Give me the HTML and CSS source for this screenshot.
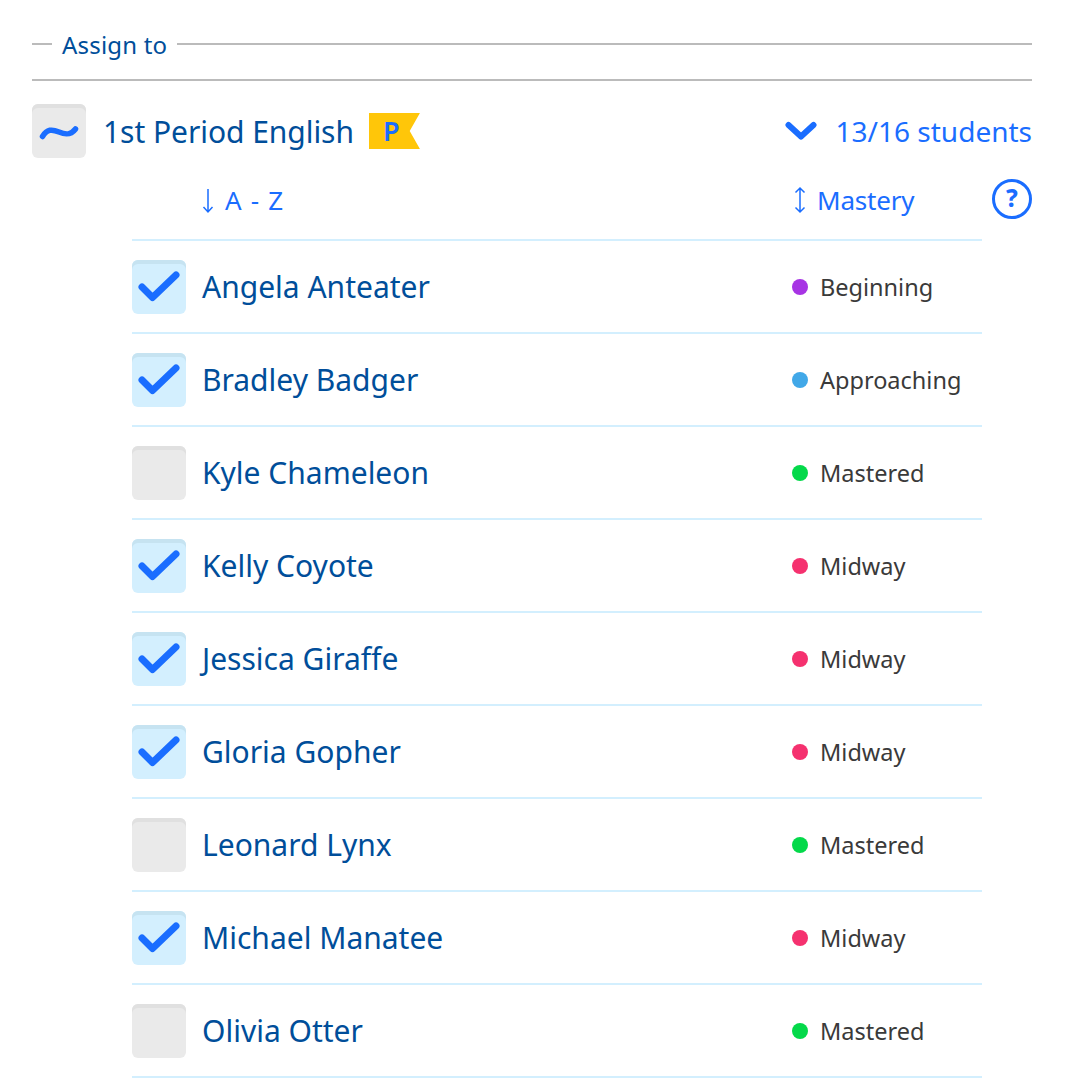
FILE: index.html
```html
<!DOCTYPE html>
<html lang="en">
<head>
<meta charset="utf-8">
<title>Assign to</title>
<link rel="stylesheet" href="styles.css">
</head>
<body>
<main class="page">
  <div class="legend">
    <span class="legend-dash"></span>
    <span class="legend-text">Assign to</span>
    <span class="legend-line"></span>
  </div>
  <div class="class-row">
    <span class="box box-partial">
      <svg viewBox="0 0 54 54" width="54" height="54"><path d="M10.500 32.500 C15 25 20 25 27 28 C34 31 39 31 43.500 25" fill="none" stroke="#1a6dff" stroke-width="5.500" stroke-linecap="round"/></svg>
    </span>
    <span class="class-name">1st Period English</span>
    <span class="flag">P</span>
    <span class="spacer"></span>
    <svg class="chevron" viewBox="0 0 32 20" width="32" height="20"><path d="M3.500 4 L16 15.500 L28.500 4" fill="none" stroke="#1a6dff" stroke-width="6" stroke-linecap="round" stroke-linejoin="round"/></svg>
    <span class="count">13/16 students</span>
  </div>
  <div class="sort-row">
    <span class="sort sort-name">
      <svg viewBox="0 0 12 28" width="12" height="28"><path d="M6 3 V26 M1.500 21 L6 26 L10.500 21" fill="none" stroke="#1a6dff" stroke-width="1.500"/></svg>
      A - Z
    </span>
    <span class="sort sort-mastery">
      <svg viewBox="0 0 12 28" width="12" height="28"><path d="M6 2 V26 M1.500 6.500 L6 2 L10.500 6.500 M1.500 21.500 L6 26 L10.500 21.500" fill="none" stroke="#1a6dff" stroke-width="1.500"/></svg>
      Mastery
    </span>
    <span class="help">?</span>
  </div>
  <ul class="students">
    <li class="student"><span class="box box-on"><svg viewBox="0 0 54 54" width="54" height="54"><path d="M10 27 L20.500 37.500 L44 15" fill="none" stroke="#1a6dff" stroke-width="7" stroke-linecap="round" stroke-linejoin="round"/></svg></span><span class="name">Angela Anteater</span><span class="level"><i class="dot dot-beginning"></i>Beginning</span></li>
    <li class="student"><span class="box box-on"><svg viewBox="0 0 54 54" width="54" height="54"><path d="M10 27 L20.500 37.500 L44 15" fill="none" stroke="#1a6dff" stroke-width="7" stroke-linecap="round" stroke-linejoin="round"/></svg></span><span class="name">Bradley Badger</span><span class="level"><i class="dot dot-approaching"></i>Approaching</span></li>
    <li class="student"><span class="box"></span><span class="name">Kyle Chameleon</span><span class="level"><i class="dot dot-mastered"></i>Mastered</span></li>
    <li class="student"><span class="box box-on"><svg viewBox="0 0 54 54" width="54" height="54"><path d="M10 27 L20.500 37.500 L44 15" fill="none" stroke="#1a6dff" stroke-width="7" stroke-linecap="round" stroke-linejoin="round"/></svg></span><span class="name">Kelly Coyote</span><span class="level"><i class="dot dot-midway"></i>Midway</span></li>
    <li class="student"><span class="box box-on"><svg viewBox="0 0 54 54" width="54" height="54"><path d="M10 27 L20.500 37.500 L44 15" fill="none" stroke="#1a6dff" stroke-width="7" stroke-linecap="round" stroke-linejoin="round"/></svg></span><span class="name">Jessica Giraffe</span><span class="level"><i class="dot dot-midway"></i>Midway</span></li>
    <li class="student"><span class="box box-on"><svg viewBox="0 0 54 54" width="54" height="54"><path d="M10 27 L20.500 37.500 L44 15" fill="none" stroke="#1a6dff" stroke-width="7" stroke-linecap="round" stroke-linejoin="round"/></svg></span><span class="name">Gloria Gopher</span><span class="level"><i class="dot dot-midway"></i>Midway</span></li>
    <li class="student"><span class="box"></span><span class="name">Leonard Lynx</span><span class="level"><i class="dot dot-mastered"></i>Mastered</span></li>
    <li class="student"><span class="box box-on"><svg viewBox="0 0 54 54" width="54" height="54"><path d="M10 27 L20.500 37.500 L44 15" fill="none" stroke="#1a6dff" stroke-width="7" stroke-linecap="round" stroke-linejoin="round"/></svg></span><span class="name">Michael Manatee</span><span class="level"><i class="dot dot-midway"></i>Midway</span></li>
    <li class="student"><span class="box"></span><span class="name">Olivia Otter</span><span class="level"><i class="dot dot-mastered"></i>Mastered</span></li>
  </ul>
</main>
</body>
</html>
```
FILE: styles.css
```css
* { box-sizing: border-box; }
html, body { margin: 0; padding: 0; background: #fff; }
body { font-family: "Noto Sans", "Open Sans", sans-serif; color: #004e9a; overflow: hidden; }
.page { width: 1066px; height: 1086px; padding: 28px 34px 0 32px; }

.legend { display: flex; align-items: center; height: 32px; gap: 10px; }
.legend-dash { width: 20px; height: 2px; background: #bbb; }
.legend-line { flex: 1; height: 2px; background: #bbb; }
.legend-text { font-size: 24px; letter-spacing: 0.2px; }

.class-row { display: flex; align-items: center; margin-top: 19px; border-top: 2px solid #bbb; padding-top: 23px; height: 79px; }
.box { flex: none; display: block; width: 54px; height: 54px; border-radius: 6px; background: #eaeaea; box-shadow: inset 0 4px 0 #e0e0e0; }
.box svg { display: block; }
.box-on { background: #d3effe; box-shadow: inset 0 4px 0 #c6e3f1; }
.class-name { font-size: 30px; margin-left: 17px; letter-spacing: -0.05px; }
.flag { width: 51px; height: 36px; margin-left: 15px; background: #ffc609; color: #1a6dff; font-size: 27px; font-weight: 600; line-height: 36px; padding-left: 14px; clip-path: polygon(0 0, 100% 0, 80% 50%, 100% 100%, 0 100%); }
.spacer { flex: 1; }
.chevron { margin-right: 19px; }
.count { font-size: 28px; color: #1a6dff; }

.sort-row { display: flex; align-items: center; height: 81px; padding: 2px 0 0 170px; position: relative; }
.sort { display: inline-flex; align-items: center; gap: 11px; font-size: 26px; color: #1a6dff; }
.sort-name { letter-spacing: 1.2px; }
.sort-mastery { position: absolute; left: 762px; letter-spacing: -0.2px; }
.help { position: absolute; right: 0; top: 21px; width: 40px; height: 40px; border: 3.500px solid #1a6dff; border-radius: 50%; text-align: center; color: #1a6dff; font-size: 24px; font-weight: 800; line-height: 32px; }

.students { list-style: none; margin: 0 0 0 100px; padding: 0; width: 850px; border-top: 2px solid #d3effe; }
.student { display: flex; align-items: center; height: 93px; border-bottom: 2px solid #d3effe; }
.name { font-size: 30px; margin-left: 16px; flex: 1; }
.level { width: 190px; display: flex; align-items: center; gap: 12px; font-size: 23.500px; color: #3a3a3a; }
.dot { width: 16px; height: 16px; border-radius: 50%; flex: none; }
.dot-beginning { background: #a734e4; }
.dot-approaching { background: #41a8e8; }
.dot-mastered { background: #04d94a; }
.dot-midway { background: #f5316f; }
```
